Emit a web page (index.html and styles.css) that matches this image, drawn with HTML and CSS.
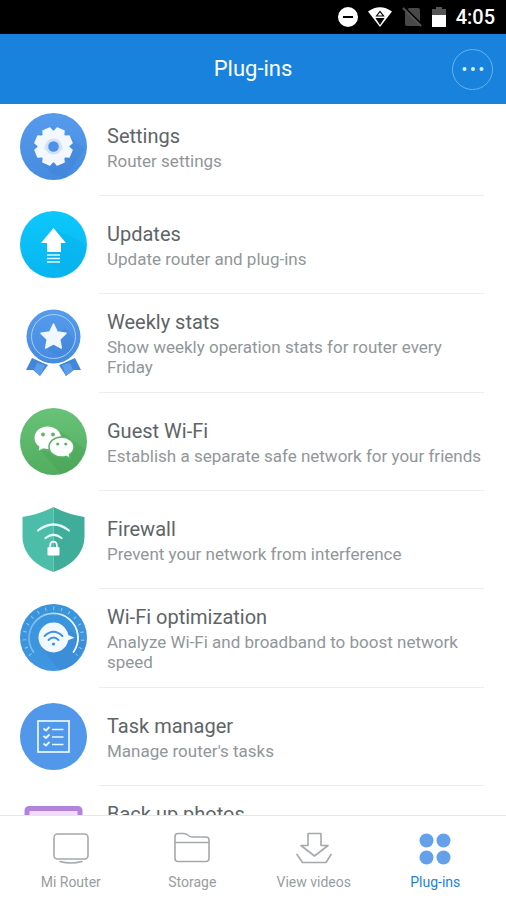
FILE: index.html
```
<!doctype html>
<html lang="en">
<head>
<meta charset="utf-8" />
<meta name="viewport" content="width=device-width, initial-scale=1" />
<title>Plug-ins</title>
<link rel="stylesheet" href="styles.css">
</head>
<body>
<div class="statusbar">
  <svg width="20" height="20" viewBox="0 0 20 20" aria-hidden="true">
    <circle cx="10" cy="10" r="10" fill="#fff" />
    <rect x="5" y="9" width="10" height="2" fill="#000" />
  </svg>
  <svg width="24" height="20" viewBox="0 0 24 20" aria-hidden="true">
    <path d="M0 4.500Q12 -4 24 4.500L12 20z" fill="#fff" />
    <path d="M8.500 9L12 4.500L15.500 9zM8.500 11.500h7L12 17z" fill="#fff" stroke="#000" stroke-width="1.200" />
    <path d="M9 12h6L12 16.500z" fill="#000" />
  </svg>
  <svg width="20" height="20" viewBox="0 0 20 20" aria-hidden="true">
    <path d="M7 1h9q2 0 2 2v14q0 2-2 2H5q-2 0-2-2V5z" fill="#484848" />
    <path d="M2 0L20 18" stroke="#000" stroke-width="2" />
    <path d="M1 1L19 19" stroke="#555" stroke-width="2" />
  </svg>
  <svg width="14" height="20" viewBox="0 0 14 20" aria-hidden="true">
    <path d="M0 9V2h4V0h6v2h4v7z" fill="#555" />
    <path d="M0 8h14v12H0z" fill="#fff" />
  </svg>
  <span class="clock">4:05</span>
</div>

<header class="topbar">
  <h1>Plug-ins</h1>
  <button class="more" type="button" aria-label="More">
    <svg width="22" height="4" viewBox="0 0 22 4" fill="#d5f4ff" aria-hidden="true">
      <circle cx="2.500" cy="2" r="2" /><circle cx="11" cy="2" r="2" /><circle cx="19.500" cy="2" r="2" />
    </svg>
  </button>
</header>

<main class="content">
<ul class="plugins">
  <li class="plugin">
    <svg class="plugin-icon" viewBox="0 0 67 67" aria-hidden="true">
      <defs>
        <linearGradient id="blue" x1="0" y1="0" x2="0" y2="1"><stop offset="0" stop-color="#569bec" /><stop offset="1" stop-color="#458be0" /></linearGradient>
        <clipPath id="disc"><circle cx="33.500" cy="33.500" r="33.500" /></clipPath>
        <path id="tooth" d="M28.500 20L29.800 15.200H37.200L38.500 20z" stroke="#f3f7fe" stroke-width="1.800" stroke-linejoin="round" />
      </defs>
      <circle cx="33.500" cy="33.500" r="33.500" fill="url(#blue)" />
      <path d="M50 24L65 36L45 65L31 60L22 49z" fill="#3f80d3" opacity=".35" clip-path="url(#disc)" />
      <g fill="#f3f7fe">
        <circle cx="33.500" cy="33.500" r="16" />
        <use href="#tooth" transform="rotate(22.500 33.500 33.500)" />
        <use href="#tooth" transform="rotate(67.500 33.500 33.500)" />
        <use href="#tooth" transform="rotate(112.500 33.500 33.500)" />
        <use href="#tooth" transform="rotate(157.500 33.500 33.500)" />
        <use href="#tooth" transform="rotate(202.500 33.500 33.500)" />
        <use href="#tooth" transform="rotate(247.500 33.500 33.500)" />
        <use href="#tooth" transform="rotate(292.500 33.500 33.500)" />
        <use href="#tooth" transform="rotate(337.500 33.500 33.500)" />
      </g>
      <path d="M24 36a9.500 9.500 0 1 1 19 0c-3 4-16 4-19 0z" fill="#dfe9fa" />
      <circle cx="33.500" cy="33.500" r="8" fill="#d3e1f7" />
      <circle cx="33.500" cy="33.500" r="5.300" fill="#4d92e6" />
    </svg>
    <div class="plugin-text">
      <h2>Settings</h2>
      <p>Router settings</p>
    </div>
  </li>
  <li class="plugin">
    <svg class="plugin-icon" viewBox="0 0 67 67" aria-hidden="true">
      <defs><linearGradient id="cyan" x1="0" y1="0" x2="0" y2="1"><stop offset="0" stop-color="#0cc8fc" /><stop offset="1" stop-color="#08b5f0" /></linearGradient></defs>
      <circle cx="33.500" cy="33.500" r="33.500" fill="url(#cyan)" />
      <path d="M35 18L43 23L49 24L57 29Q64 30 66 38L60 54L46 64L27 50z" fill="#05aae4" opacity=".3" clip-path="url(#disc)" />
      <path d="M33.500 17L46 32H41V41H27V32H21z" fill="#fff" />
      <path d="M27 44h13M27 47.500h13M27 51h13" stroke="#dff7ff" stroke-width="1.300" />
    </svg>
    <div class="plugin-text">
      <h2>Updates</h2>
      <p>Update router and plug-ins</p>
    </div>
  </li>
  <li class="plugin">
    <svg class="plugin-icon" viewBox="0 0 67 67" aria-hidden="true">
      <g fill="#3f86dc">
        <path d="M12 49L6 61L13 61L20 67L28 56z" />
        <path d="M55 49L61 61L54 61L46 67L39 56z" />
      </g>
      <path d="M17 54L14 61L20 67L25 56zM50 54L53 61L46 67L42 56z" fill="#5c9ee9" />
      <circle cx="33.500" cy="27.500" r="28.500" fill="#fff" />
      <circle cx="33.500" cy="27.500" r="27" fill="url(#blue)" />
      <path d="M45 19L55 32Q52 46 39 48L25 38z" fill="#3f80d3" opacity=".35" />
      <circle cx="33.500" cy="27.500" r="22" fill="none" stroke="#a9cff8" stroke-width="1" />
      <path d="M33.500 15L37.300 23L46 24.200L39.700 30.400L41.300 39L33.500 34.900L25.700 39L27.300 30.400L21 24.200L29.700 23z" fill="#f1f7ff" stroke="#f1f7ff" stroke-width="1.500" stroke-linejoin="round" />
    </svg>
    <div class="plugin-text">
      <h2>Weekly stats</h2>
      <p>Show weekly operation stats for router every Friday</p>
    </div>
  </li>
  <li class="plugin">
    <svg class="plugin-icon" viewBox="0 0 67 67" aria-hidden="true">
      <defs><linearGradient id="green" x1="0" y1="0" x2="0" y2="1"><stop offset="0" stop-color="#68c277" /><stop offset="1" stop-color="#51ad60" /></linearGradient></defs>
      <circle cx="33.500" cy="33.500" r="33.500" fill="url(#green)" />
      <path d="M40 23L66 42L54 61L41 66L20 42L50 48z" fill="#459f54" opacity=".35" clip-path="url(#disc)" />
      <path d="M27.500 18.500c-7.500 0-13 5-13 11.300 0 3.800 2 6.900 5 8.900L18.700 42.500L23.500 40.200Q25.500 41 28 41C35.500 41 41 36 41 29.800S35 18.500 27.500 18.500z" fill="#fff" />
      <path d="M41.500 29c-7 0-12.500 4.300-12.500 10s5.500 10 12.500 10q2.500 0 4.500-.6L50.200 50.400L49.500 46.700Q54 43.500 54 39C54 33.300 48.500 29 41.500 29z" fill="#fff" stroke="#59b468" stroke-width="1.500" />
      <g fill="#5bb66a">
        <circle cx="23" cy="26.500" r="1.900" /><circle cx="33" cy="26.500" r="1.900" />
        <circle cx="37.700" cy="36" r="1.600" /><circle cx="45.800" cy="36" r="1.600" />
      </g>
    </svg>
    <div class="plugin-text">
      <h2>Guest Wi-Fi</h2>
      <p>Establish a separate safe network for your friends</p>
    </div>
  </li>
  <li class="plugin">
    <svg class="plugin-icon" viewBox="0 0 67 67" aria-hidden="true">
      <path d="M33.500 1Q19 8.500 2.500 11V30C2.500 48 16 60 33.500 66z" fill="#4cbda9" />
      <path d="M33.500 1Q48 8.500 64.500 11V30C64.500 48 51 60 33.500 66z" fill="#3fad99" />
      <path d="M18 24.500Q33.500 12.500 49 24.500M25.500 32Q33.500 25.500 41.500 32" fill="none" stroke="#e4fffa" stroke-width="2.200" stroke-linecap="round" />
      <path d="M30.200 42V39a3.300 3.300 0 0 1 6.600 0V42" fill="none" stroke="#fff" stroke-width="1.700" />
      <rect x="27.500" y="41" width="12" height="8.500" rx="1" fill="#fff" />
    </svg>
    <div class="plugin-text">
      <h2>Firewall</h2>
      <p>Prevent your network from interference</p>
    </div>
  </li>
  <li class="plugin">
    <svg class="plugin-icon" viewBox="0 0 67 67" aria-hidden="true">
      <defs>
        <linearGradient id="sky" x1="0" y1="0" x2="0" y2="1"><stop offset="0" stop-color="#3994dc" /><stop offset="1" stop-color="#4096e0" /></linearGradient>
        <linearGradient id="dial" x1="0" y1="0" x2="1" y2="0"><stop offset="0" stop-color="#70b7ef" /><stop offset="1" stop-color="#fff" /></linearGradient>
      </defs>
      <circle cx="33.500" cy="33.500" r="33.500" fill="url(#sky)" />
      <path d="M45 23L67 38L52 65H38L22 44z" fill="#347fcc" opacity=".3" clip-path="url(#disc)" />
      <path d="M10.500 51A29 29 0 1 1 56.500 51" fill="none" stroke="#8fc8f3" stroke-width="3.500" stroke-dasharray="1 7" />
      <path d="M13.500 48A24.500 24.500 0 1 1 53.500 48" fill="none" stroke="url(#dial)" stroke-width="1.800" stroke-linecap="round" />
      <path d="M46 30L54.500 33.800L46 37z" fill="#eef7ff" />
      <circle cx="33.500" cy="33.500" r="15" fill="#f1f8ff" />
      <path d="M24.500 32Q33.500 23.500 42.500 32M28.500 36Q33.500 31 38.500 36" fill="none" stroke="#3d93dd" stroke-width="1.900" stroke-linecap="round" />
      <circle cx="33.500" cy="40" r="1.600" fill="#3d93dd" />
    </svg>
    <div class="plugin-text">
      <h2>Wi-Fi optimization</h2>
      <p>Analyze Wi-Fi and broadband to boost network speed</p>
    </div>
  </li>
  <li class="plugin">
    <svg class="plugin-icon" viewBox="0 0 67 67" aria-hidden="true">
      <circle cx="33.500" cy="33.500" r="33.500" fill="#5197ea" />
      <rect x="18" y="18" width="31" height="31" fill="none" stroke="#ecf6ff" stroke-width="1.700" />
      <path d="M23.500 25.500l2.500 2 3.500-3.500M23.500 33l2.500 2 3.500-3.500M23.500 40.500l2.500 2 3.500-3.500" fill="none" stroke="#ecf6ff" stroke-width="1.800" />
      <path d="M32 26.500h11.500M32 34h11.500M32 41.500h11.500" stroke="#ecf6ff" stroke-width="1.700" />
    </svg>
    <div class="plugin-text">
      <h2>Task manager</h2>
      <p>Manage router's tasks</p>
    </div>
  </li>
  <li class="plugin">
    <svg class="plugin-icon" viewBox="0 0 67 67" aria-hidden="true">
      <rect x="7" y="7.500" width="53" height="53" rx="2" fill="#f0dbfa" stroke="#b183da" stroke-width="5" />
      <circle cx="24" cy="24" r="5" fill="#b183da" />
      <path d="M12 52L28 34L38 44L46 36L56 52z" fill="#b183da" />
    </svg>
    <div class="plugin-text">
      <h2>Back up photos</h2>
      <p>Back up photos and videos from your phone to router automatically</p>
    </div>
  </li>
</ul>
</main>

<nav class="tabs">
  <a href="#router">
    <svg width="36" height="36" viewBox="0 0 36 36" aria-hidden="true">
      <rect x="1" y="2" width="34" height="25" rx="3.500" />
      <path d="M7 29.500Q18 32.500 29 29.500" />
    </svg>
    Mi Router
  </a>
  <a href="#storage">
    <svg width="36" height="36" viewBox="0 0 36 36" aria-hidden="true">
      <path d="M1 26.500V4.500Q1 1.500 4 1.500H10C14 1.500 14 5 18 5H32Q35 5 35 8V26.500Q35 29.500 32 29.500H4Q1 29.500 1 26.500zM1 10.500H35" />
    </svg>
    Storage
  </a>
  <a href="#videos">
    <svg width="36" height="36" viewBox="0 0 36 36" aria-hidden="true">
      <path d="M12 1.500H25V13.500H32L18.500 24L5 13.500H12z" />
      <path d="M1 22.500L6.500 30.500H30L35 22.500" />
    </svg>
    View videos
  </a>
  <a href="#plugins" class="active" aria-current="page">
    <svg width="36" height="36" viewBox="0 0 36 36" aria-hidden="true">
      <circle cx="9.500" cy="8.500" r="7" /><circle cx="26.500" cy="8.500" r="7" />
      <circle cx="9.500" cy="25.500" r="7" /><circle cx="26.500" cy="25.500" r="7" />
    </svg>
    Plug-ins
  </a>
</nav>
</body>
</html>
```

FILE: styles.css
```
:root{
  --bar:#1882dd;
  --title:#606467;--sub:#929699;
  --line:#ededed;
  --tab:#999da0;--tab-icon:#a5a9ac;--tab-active:#1c82db;
}
*{box-sizing:border-box;margin:0;padding:0}
body{
  height:100vh;
  display:flex;flex-direction:column;
  background:#fff;color:var(--title);
  font-family:Roboto,"Liberation Sans",sans-serif;
}

.statusbar{
  flex:none;height:34px;padding:0 11px;
  display:flex;align-items:center;justify-content:flex-end;gap:10px;
  background:#000;color:#fff;
}
.clock{font-size:20px;line-height:24px;font-weight:500}

.topbar{
  flex:none;height:70px;padding:0 13px;
  display:grid;grid-template-columns:1fr auto 1fr;align-items:center;
  background:var(--bar);color:#fff;
}
.topbar h1{grid-column:2;font-size:22px;line-height:28px;font-weight:400}
.more{
  justify-self:end;
  width:41px;height:41px;
  display:flex;align-items:center;justify-content:center;
  border:1px solid #68b4f0;border-radius:50%;
  background:none;cursor:pointer;
}

.content{flex:1;min-height:0;overflow-y:auto;scrollbar-width:none}
/* list sits slightly scrolled under the header */
.plugins{list-style:none;margin-top:-6px}
.plugin{display:flex;align-items:center;padding:0 22px 0 20px}
.plugin-icon{flex:none;width:67px;height:67px;margin-bottom:2px}
.plugin-text{
  flex:1;margin-left:12px;padding:13px 0 15px 8px;
  min-height:98px;
  display:flex;flex-direction:column;justify-content:center;
  border-bottom:1px solid var(--line);
}
.plugin h2{font-size:20px;line-height:30px;font-weight:400;color:var(--title)}
.plugin p{font-size:17px;line-height:20px;color:var(--sub)}

.tabs{
  flex:none;height:85px;padding:16px 10px 0;
  display:flex;
  border-top:1px solid #e6e6e6;background:#fff;
}
.tabs a{
  flex:1;
  display:flex;flex-direction:column;align-items:center;gap:4px;
  font-size:14px;line-height:20px;
  color:var(--tab);text-decoration:none;
}
.tabs svg{fill:none;stroke:var(--tab-icon);stroke-width:1.6;stroke-linejoin:round;stroke-linecap:round}
.tabs .active{color:var(--tab-active)}
.tabs .active svg{fill:#65a0ea;stroke:none}
```
